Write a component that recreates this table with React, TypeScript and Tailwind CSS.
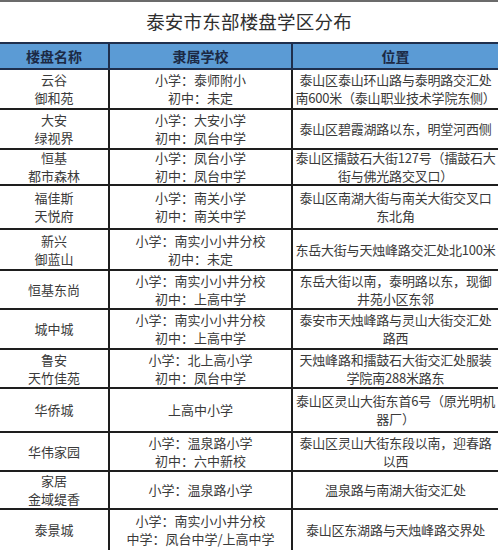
import React from 'react'

type Row = {
  name: string[]
  school: string[]
  place: string[]
  h: string
}

const rows: Row[] = [
  { name: ['云谷', '御和苑'], school: ['小学：泰师附小', '初中：未定'], place: ['泰山区泰山环山路与泰明路交汇处', '南600米（泰山职业技术学院东侧）'], h: 'h-[40px]' },
  { name: ['大安', '绿视界'], school: ['小学：大安小学', '初中：凤台中学'], place: ['泰山区碧霞湖路以东，明堂河西侧'], h: 'h-[40px]' },
  { name: ['恒基', '都市森林'], school: ['小学：凤台小学', '初中：凤台中学'], place: ['泰山区擂鼓石大街127号（擂鼓石大', '街与佛光路交叉口）'], h: 'h-[36px]' },
  { name: ['福佳斯', '天悦府'], school: ['小学：南关小学', '初中：南关中学'], place: ['泰山区南湖大街与南关大街交叉口', '东北角'], h: 'h-[44px]' },
  { name: ['新兴', '御蓝山'], school: ['小学：南实小小井分校', '初中：未定'], place: ['东岳大街与天烛峰路交汇处北100米'], h: 'h-[41px]' },
  { name: ['恒基东尚'], school: ['小学：南实小小井分校', '初中：上高中学'], place: ['东岳大街以南，泰明路以东，现御', '井苑小区东邻'], h: 'h-[39px]' },
  { name: ['城中城'], school: ['小学：南实小小井分校', '初中：上高中学'], place: ['泰安市天烛峰路与灵山大街交汇处', '路西'], h: 'h-[40px]' },
  { name: ['鲁安', '天竹佳苑'], school: ['小学：北上高小学', '初中：凤台中学'], place: ['天烛峰路和擂鼓石大街交汇处服装', '学院南288米路东'], h: 'h-[39px]' },
  { name: ['华侨城'], school: ['上高中小学'], place: ['泰山区灵山大街东首6号（原光明机', '器厂）'], h: 'h-[44px]' },
  { name: ['华伟家园'], school: ['小学：温泉路小学', '初中：六中新校'], place: ['泰山区灵山大街东段以南，迎春路', '以西'], h: 'h-[39px]' },
  { name: ['家居', '金域缇香'], school: ['小学：温泉路小学'], place: ['温泉路与南湖大街交汇处'], h: 'h-[38px]' },
  { name: ['泰景城'], school: ['小学：南实小小井分校', '中学：凤台中学/上高中学'], place: ['泰山区东湖路与天烛峰路交界处'], h: 'h-[42px]' },
]

function Lines({ lines }: { lines: string[] }) {
  return (
    <>
      {lines.map((l, i) => (
        <span key={i} className="block whitespace-nowrap">
          {l}
        </span>
      ))}
    </>
  )
}

export default function App() {
  return (
    <div
      className="w-[498px] h-[550px] overflow-hidden bg-white text-[#3a3a3a]"
      style={{ fontFamily: '"Noto Sans CJK SC", "Noto Sans", sans-serif' }}
    >
      {/* Title */}
      <div className="h-[42px] border-t-2 border-[#6b6b6b] flex items-center justify-center">
        <h1 className="text-[18.5px] leading-none text-[#2e2e2e] tracking-[0.2px] -mt-[1px]">泰安市东部楼盘学区分布</h1>
      </div>

      {/* Header */}
      <div className="flex h-[28px] bg-[#5b9bd5] border-t-2 border-b-2 border-[#1f2f4d] text-[14px] font-bold text-[#1c2a45]">
        <div className="w-[110px] shrink-0 border-r-2 border-[#1f2f4d] flex items-center justify-center">楼盘名称</div>
        <div className="w-[183px] shrink-0 border-r-2 border-[#1f2f4d] flex items-center justify-center">隶属学校</div>
        <div className="flex-1 flex items-center justify-center">位置</div>
      </div>

      {/* Body */}
      {rows.map((r, i) => (
        <div key={i} className={`flex ${r.h} border-b-2 border-[#1e1e1e] text-[13px] leading-[18px]`}>
          <div className="w-[110px] shrink-0 border-r-2 border-[#1e1e1e] flex flex-col items-center justify-center text-center">
            <Lines lines={r.name} />
          </div>
          <div className="w-[183px] shrink-0 border-r-2 border-[#1e1e1e] flex flex-col items-center justify-center text-center">
            <Lines lines={r.school} />
          </div>
          <div className="flex-1 flex flex-col items-center justify-center text-center tracking-[-0.2px]">
            <Lines lines={r.place} />
          </div>
        </div>
      ))}
    </div>
  )
}
